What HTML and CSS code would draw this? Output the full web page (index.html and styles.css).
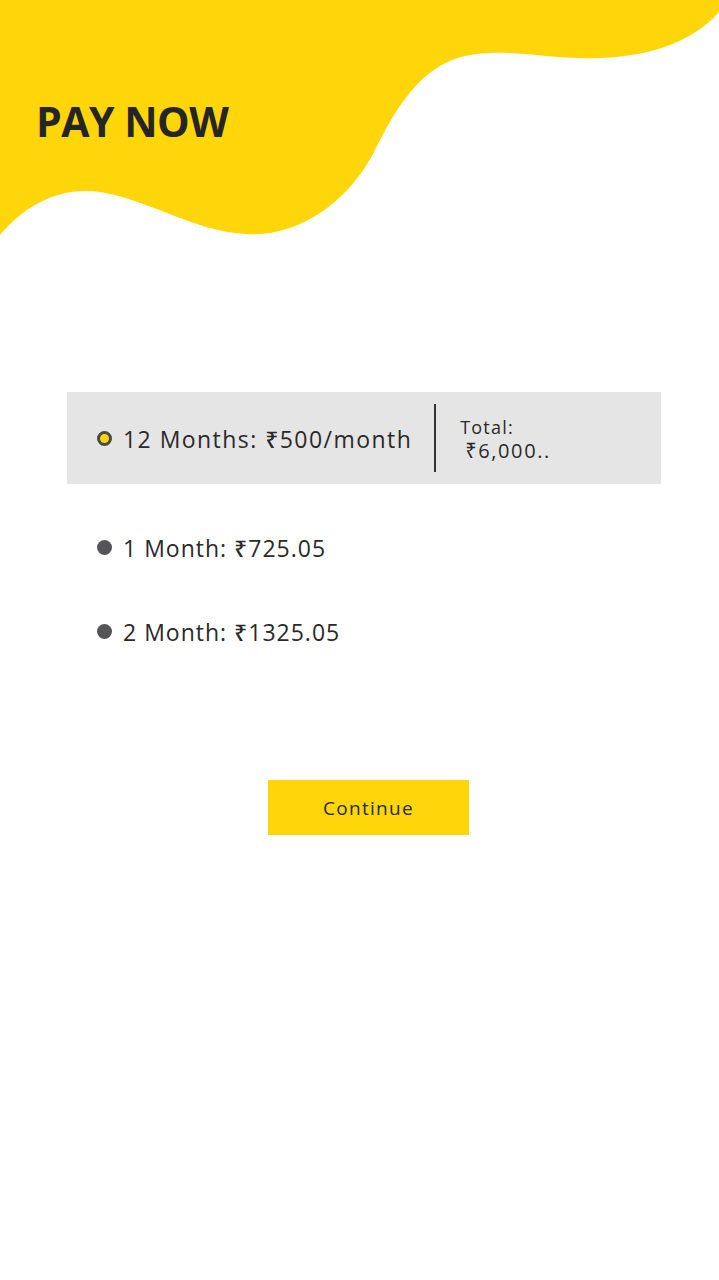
FILE: index.html
```html
<!DOCTYPE html>
<html lang="en">
<head>
<meta charset="utf-8">
<title>Pay Now</title>
<link rel="stylesheet" href="styles.css">
</head>
<body>
<div class="page">
  <header class="hero">
    <svg class="wave" viewBox="0 0 719 240" width="719" height="240" preserveAspectRatio="none" aria-hidden="true">
      <path d="M0 0 H719 V12 C690 45 640 60 580 58 C540 57 500 48 465 56 C420 66 395 110 375 150 C350 200 300 238 245 234 C190 230 150 200 100 192 C60 186 25 205 0 235 Z" fill="#FFD60A"/>
    </svg>
    <h1 class="title">PAY NOW</h1>
  </header>

  <section class="plans">
    <div class="plan plan-selected">
      <div class="plan-main">
        <span class="radio radio-on"></span>
        <span class="plan-label plan-label-wide">12 Months: ₹500/month</span>
      </div>
      <div class="divider"></div>
      <div class="plan-total">
        <span class="total-label">Total:</span>
        <span class="total-value">₹6,000..</span>
      </div>
    </div>

    <div class="plan plan-row">
      <div class="plan-main">
        <span class="radio"></span>
        <span class="plan-label">1 Month: ₹725.05</span>
      </div>
    </div>

    <div class="plan plan-row">
      <div class="plan-main">
        <span class="radio"></span>
        <span class="plan-label">2 Month: ₹1325.05</span>
      </div>
    </div>
  </section>

  <div class="actions">
    <button class="btn-continue" type="button">Continue</button>
  </div>
</div>
</body>
</html>
```

FILE: styles.css
```css
html, body {
  margin: 0;
  padding: 0;
  background: #ffffff;
}

body {
  font-family: "Open Sans", "Noto Sans", "DejaVu Sans", sans-serif;
  color: #2a2a2a;
  width: 719px;
  height: 1280px;
  overflow: hidden;
}

.page {
  display: flex;
  flex-direction: column;
}

.hero {
  position: relative;
  height: 240px;
}

.wave {
  position: absolute;
  left: 0;
  top: 0;
  display: block;
}

.title {
  position: relative;
  margin: 0;
  padding: 91px 0 0 36px;
  font-size: 41px;
  font-weight: 700;
  letter-spacing: -0.5px;
  line-height: 60px;
  color: #252525;
}

.plans {
  display: flex;
  flex-direction: column;
  margin: 152px 58px 0 67px;
}

.plan {
  display: flex;
  align-items: center;
}

.plan-selected {
  background: #e5e5e5;
  height: 92px;
}

.plan-row {
  height: 50px;
  margin-top: 38px;
}

.plan-row + .plan-row {
  margin-top: 34px;
}

.plan-main {
  display: flex;
  align-items: center;
  padding-left: 30px;
}

.radio {
  width: 15px;
  height: 15px;
  border-radius: 50%;
  background: #555557;
  box-sizing: border-box;
  flex: none;
  margin-right: 11px;
}

.radio-on {
  border: 3px solid #4a4a48;
  background: #FFD60A;
}

.plan-label {
  font-size: 23px;
  font-weight: 500;
  color: #2a2a2a;
  letter-spacing: 1px;
  white-space: nowrap;
  line-height: 30px;
  padding-top: 2px;
}

.plan-label-wide {
  letter-spacing: 1.45px;
}

.divider {
  width: 2px;
  height: 68px;
  background: #333333;
  margin-left: 22px;
}

.plan-total {
  display: flex;
  flex-direction: column;
  margin-left: 24px;
  margin-top: 2px;
  font-size: 18px;
  line-height: 23px;
  letter-spacing: 1.2px;
  color: #2a2a2a;
}

.total-value {
  padding-left: 5px;
  font-size: 20px;
  letter-spacing: 1.6px;
}

.actions {
  display: flex;
  justify-content: center;
  margin-top: 124px;
  padding-left: 18px;
}

.btn-continue {
  width: 201px;
  height: 55px;
  border: none;
  border-radius: 0;
  background: #FFD60A;
  font-family: "Open Sans", "Noto Sans", sans-serif;
  font-size: 19px;
  letter-spacing: 1.3px;
  color: #2a2a2a;
  padding: 0;
  cursor: pointer;
}
```
